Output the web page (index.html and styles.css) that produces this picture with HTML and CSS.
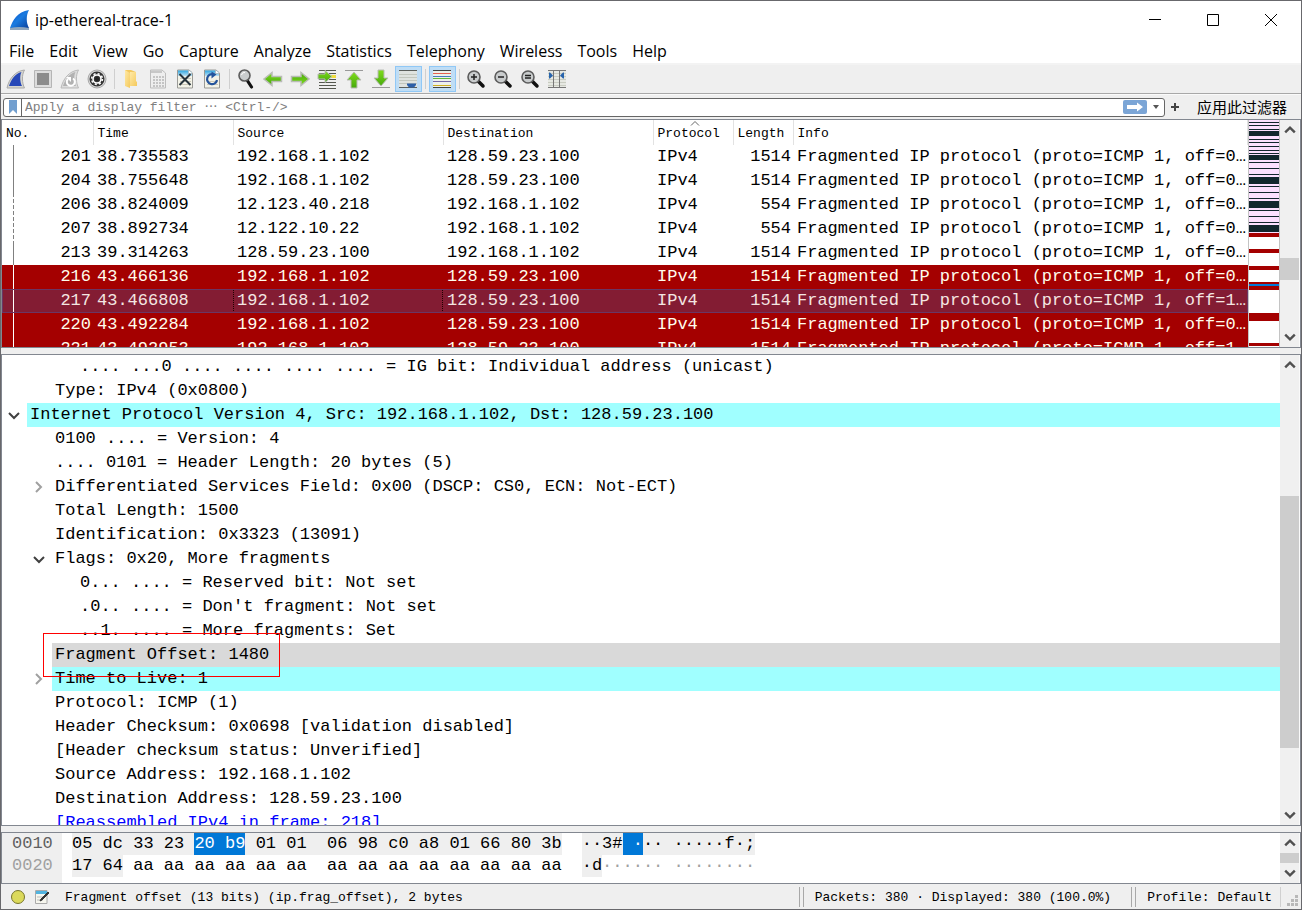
FILE: index.html
```html
<!DOCTYPE html>
<html lang="zh-CN">
<head>
<meta charset="utf-8">
<title>ip-ethereal-trace-1</title>
<link rel="stylesheet" href="styles.css">
</head>
<body>
<svg class="defs" width="0" height="0" aria-hidden="true">
  <defs>
    <linearGradient id="fin-blue" x1="0" y1="0" x2="1" y2="1"><stop offset="0" stop-color="#0a50c8"/><stop offset="0.5" stop-color="#1a7be0"/><stop offset="1" stop-color="#0a3f9a"/></linearGradient>
    <linearGradient id="page-top" x1="0" y1="0" x2="0" y2="1"><stop offset="0" stop-color="#2fa5e0"/><stop offset="1" stop-color="#bfe2f2"/></linearGradient>
    <linearGradient id="leaf" x1="0" y1="0" x2="0" y2="1"><stop offset="0" stop-color="#7fdc1c"/><stop offset="1" stop-color="#46a80c"/></linearGradient>
    <linearGradient id="folder" x1="0" y1="0" x2="1" y2="1"><stop offset="0" stop-color="#ffe9a6"/><stop offset="1" stop-color="#f4c95c"/></linearGradient>
    <symbol id="up" viewBox="0 0 10 10"><path d="M1 7 5 3 9 7" fill="none" stroke="#505050" stroke-width="2"/></symbol>
    <symbol id="down" viewBox="0 0 10 10"><path d="M1 3 5 7 9 3" fill="none" stroke="#505050" stroke-width="2"/></symbol>
    <symbol id="arrow" viewBox="0 0 20 20"><path d="M1 10 9 3.500V7.500H18.500V12.500H9V16.500Z" fill="url(#leaf)" stroke="#b9bcb6" stroke-width="1.500"/></symbol>
    <symbol id="lens" viewBox="0 0 20 20"><path d="M12 12 17 17" stroke="#111" stroke-width="3.500" stroke-linecap="round"/><circle cx="8" cy="8" r="6" fill="#c9cccd" stroke="#5c5c5c" stroke-width="1.600"/></symbol>
    <symbol id="page" viewBox="0 0 20 20"><path d="M2.500 1H14L17.500 4V19H2.500Z" fill="#f3f3e8" stroke="#9a9a96"/><path d="M3 1.500H14L17 4V7H3Z" fill="url(#page-top)"/><path d="M13.500 1V4.500H17.500" fill="#fff" stroke="#aaa" stroke-width=".6"/></symbol>
  </defs>
</svg>

<div class="window">
  <header class="titlebar">
    <svg class="app-icon" viewBox="0 0 22 22"><path d="M1 19C4 11 8 3 20 1C17 6 17 14 20 19Z" fill="url(#fin-blue)"/><path d="M1 19Q10 17 20 19V21H1Z" fill="#8fa6bd"/></svg>
    <h1 class="title">ip-ethereal-trace-1</h1>
    <div class="window-controls">
      <button aria-label="Minimize"><svg viewBox="0 0 14 14"><path d="M1 6.500H13" /></svg></button>
      <button aria-label="Maximize"><svg viewBox="0 0 14 14"><path d="M1.500 1.500H12.500V12.500H1.500Z"/></svg></button>
      <button aria-label="Close"><svg viewBox="0 0 14 14"><path d="M1 1 13 13M13 1 1 13"/></svg></button>
    </div>
  </header>

  <nav class="menubar">
    <button>File</button><button>Edit</button><button>View</button><button>Go</button><button>Capture</button><button>Analyze</button><button>Statistics</button><button>Telephony</button><button>Wireless</button><button>Tools</button><button>Help</button>
  </nav>

  <div class="toolbar" role="toolbar">
    <button aria-label="Start capture"><svg viewBox="0 0 20 20"><path d="M1 19C3 10 9 2 18.500 1C15.500 6 16 14 18.500 19Z" fill="#d5d5d0" stroke="#aaa"/><path d="M3 17C5 11 9 4.500 15.500 3C13.500 7 14 13 16 17Z" fill="#2748b8"/></svg></button>
    <button aria-label="Stop capture"><svg viewBox="0 0 20 20"><path d="M1.500 1.500H18.500V18.500H1.500Z" fill="#ddd" stroke="#b5b5b5"/><path d="M4 4H16V16H4Z" fill="#8c8c8c"/></svg></button>
    <button aria-label="Restart capture"><svg viewBox="0 0 20 20"><path d="M1 19C3 10 9 2 18.500 1C15.500 6 16 14 18.500 19Z" fill="#ddd" stroke="#bbb"/><path d="M3 17C5 11 9 4.500 15.500 3C13.500 7 14 13 16 17Z" fill="#b2b2b2"/><path d="M13 9.500A4 4 0 1 1 8 10" fill="none" stroke="#fff" stroke-width="2"/><path d="M6 8H11V13Z" fill="#fff"/></svg></button>
    <button aria-label="Capture options"><svg viewBox="0 0 20 20"><circle cx="10" cy="10" r="9" fill="#d4d4d4" stroke="#a8a8a8"/><circle cx="10" cy="10" r="7.500" fill="#333"/><circle cx="10" cy="10" r="4" fill="none" stroke="#fff" stroke-width="1.600"/><circle cx="10" cy="10" r="5.400" fill="none" stroke="#fff" stroke-width="1.500" stroke-dasharray="2.100 2.140"/><circle cx="10" cy="10" r="2" fill="#222"/></svg></button>
    <i class="sep"></i>
    <button aria-label="Open"><svg viewBox="0 0 20 20"><path d="M4 1H10L15 3V17H4Z" fill="#f3c85f"/><path d="M4 1 9 4V19L4 17Z" fill="url(#folder)"/><path d="M9 3H15V12L16 13V17H9Z" fill="url(#folder)"/></svg></button>
    <button aria-label="Save"><svg viewBox="0 0 20 20"><path d="M2.500 1H14L17.500 4V19H2.500Z" fill="#eee" stroke="#bdbdbd"/><path d="M3 1.500H14V4H3Z" fill="#c7c7c7"/><path d="M5 8H16M5 11H16M5 14H16M5 17H16" stroke="#c4c4c4" stroke-width="2" stroke-dasharray="2 1"/></svg></button>
    <button aria-label="Close file"><svg viewBox="0 0 20 20"><use href="#page"/><path d="M5 9.500H16M5 12.500H16M5 15.500H16" stroke="#ccc8b8"/><path d="M4.500 5 15.500 16M15.500 5 4.500 16" stroke="#26333c" stroke-width="2"/></svg></button>
    <button aria-label="Reload file"><svg viewBox="0 0 20 20"><use href="#page"/><path d="M5 15.500H16M5 12.500H16" stroke="#ccc8b8"/><path d="M12 5.500A5 5 0 1 0 15 11" fill="none" stroke="#24549c" stroke-width="2.200"/><path d="M9.500 2.500V9.500L14.500 5.500Z" fill="#24549c"/></svg></button>
    <i class="sep"></i>
    <button aria-label="Find packet"><svg viewBox="0 0 20 20"><path d="M11 11 15.500 18" stroke="#111" stroke-width="3.200" stroke-linecap="round"/><circle cx="8.500" cy="6.500" r="5.500" fill="#c9cccd" stroke="#5c5c5c" stroke-width="1.600"/><path d="M5.500 6A3 3 0 0 1 9 3.500" stroke="#fff" fill="none"/></svg></button>
    <button aria-label="Previous packet"><svg viewBox="0 0 20 20"><use href="#arrow"/></svg></button>
    <button aria-label="Next packet"><svg viewBox="0 0 20 20"><use href="#arrow" transform="rotate(180 10 10)"/></svg></button>
    <button aria-label="Go to packet"><svg viewBox="0 0 20 20"><path d="M2 1.500H19M2 4.500H19M2 10.500H19M2 13.500H19M2 16.500H19M2 19.500H19" stroke="#55584f"/><path d="M14 7.500H19" stroke="#f0dc3c" stroke-width="3"/><path d="M15 7.500 8 1.500V5H1V10H8V13.500Z" fill="url(#leaf)" stroke="#b9bcb6"/></svg></button>
    <button aria-label="First packet"><svg viewBox="0 0 20 20"><path d="M1 1.500H19" stroke="#999"/><path d="M10 3 17 11H13V19H7V11H3Z" fill="url(#leaf)" stroke="#b9bcb6"/></svg></button>
    <button aria-label="Last packet"><svg viewBox="0 0 20 20"><path d="M1 18.500H19" stroke="#999"/><path d="M10 17 17 9H13V1H7V9H3Z" fill="url(#leaf)" stroke="#b9bcb6"/></svg></button>
    <button class="on" aria-label="Auto scroll" aria-pressed="true"><svg viewBox="0 0 20 20"><path d="M1 2H19V18H1Z" fill="#dfe3df"/><path d="M1 5.500H19M1 8.500H19M1 11.500H19M1 14.500H19" stroke="#c2c7be"/><path d="M1 1.500H19M1 18.500H19" stroke="#5b5f5b"/><path d="M9 14.500H18V16L16 18.500H11L9 16Z" fill="#2b5fa8"/></svg></button>
    <i class="sep"></i>
    <button class="on" aria-label="Colorize" aria-pressed="true"><svg viewBox="0 0 20 20"><path d="M1 1H19V19H1Z" fill="#edf0ea"/><path d="M1 1.500H19M1 18.500H19" stroke="#444"/><path d="M1 4.500H19" stroke="#e46050"/><path d="M1 7.500H19" stroke="#4878c0"/><path d="M1 9.500H19" stroke="#62b83c"/><path d="M1 12.500H19" stroke="#7468a8"/><path d="M1 16.500H19" stroke="#cfae20"/></svg></button>
    <i class="sep"></i>
    <button aria-label="Zoom in"><svg viewBox="0 0 20 20"><use href="#lens"/><path d="M5 8H11M8 5V11" stroke="#222" stroke-width="1.500"/></svg></button>
    <button aria-label="Zoom out"><svg viewBox="0 0 20 20"><use href="#lens"/><path d="M5 8H11" stroke="#222" stroke-width="1.500"/></svg></button>
    <button aria-label="Normal size"><svg viewBox="0 0 20 20"><use href="#lens"/><path d="M5 6.500H11M5 9H11" stroke="#222" stroke-width="1.500"/></svg></button>
    <button aria-label="Resize columns"><svg viewBox="0 0 20 20"><path d="M1 1H19V19H1Z" fill="#e6e8e2"/><path d="M1 4.500H19M1 7.500H19M1 10.500H19M1 13.500H19M1 16.500H19" stroke="#c9ccc2"/><path d="M1 1.500H19M1 18.500H19M6.500 1V19M12.500 1V19" stroke="#777"/><path d="M2 3.500H3L6 6.500 3 9.500H2ZM17 3.500H16L13 6.500 16 9.500H17Z" fill="#2864ac"/></svg></button>
  </div>

  <form class="filterbar">
    <div class="filter-box">
      <button type="button" class="bookmark" aria-label="Bookmarks"><svg viewBox="0 0 10 14"><path d="M1 0H9V14L5 10 1 14Z" fill="#729fcf"/></svg></button>
      <input class="filter-input" type="text" aria-label="Display filter" placeholder="Apply a display filter ⋯ &lt;Ctrl-/&gt;">
      <button type="button" class="apply" aria-label="Apply filter"><svg viewBox="0 0 24 14"><path d="M4 5H14V2.500L20 7 14 11.500V9H4Z" fill="#fff"/></svg></button>
      <button type="button" class="recent" aria-label="Recent filters"><svg viewBox="0 0 8 8"><path d="M1 2H7L4 6Z" fill="#555"/></svg></button>
    </div>
    <button type="button" class="add" aria-label="Add filter button"><svg viewBox="0 0 10 10"><path d="M1 5H9M5 1V9" stroke="#444" stroke-width="2"/></svg></button>
    <button type="button" class="apply-label">应用此过滤器</button>
  </form>

  <main class="panes">
    <section class="pane packets">
      <div class="pane-body">
        <table class="packet-table">
          <colgroup><col class="c-no"><col class="c-time"><col class="c-addr"><col class="c-addr"><col class="c-proto"><col class="c-len"><col></colgroup>
          <thead><tr><th>No.</th><th>Time</th><th>Source</th><th>Destination</th><th class="sorted">Protocol<svg viewBox="0 0 10 5"><path d="M1 4.500 5 .5 9 4.500" fill="none" stroke="#666"/></svg></th><th>Length</th><th>Info</th></tr></thead>
          <tbody>
            <tr><td class="num">201</td><td>38.735583</td><td>192.168.1.102</td><td>128.59.23.100</td><td>IPv4</td><td class="num">1514</td><td>Fragmented IP protocol (proto=ICMP 1, off=0…</td></tr>
            <tr><td class="num">204</td><td>38.755648</td><td>192.168.1.102</td><td>128.59.23.100</td><td>IPv4</td><td class="num">1514</td><td>Fragmented IP protocol (proto=ICMP 1, off=0…</td></tr>
            <tr class="gap"><td class="num">206</td><td>38.824009</td><td>12.123.40.218</td><td>192.168.1.102</td><td>IPv4</td><td class="num">554</td><td>Fragmented IP protocol (proto=ICMP 1, off=0…</td></tr>
            <tr class="gap"><td class="num">207</td><td>38.892734</td><td>12.122.10.22</td><td>192.168.1.102</td><td>IPv4</td><td class="num">554</td><td>Fragmented IP protocol (proto=ICMP 1, off=0…</td></tr>
            <tr><td class="num">213</td><td>39.314263</td><td>128.59.23.100</td><td>192.168.1.102</td><td>IPv4</td><td class="num">1514</td><td>Fragmented IP protocol (proto=ICMP 1, off=0…</td></tr>
            <tr class="ttl"><td class="num">216</td><td>43.466136</td><td>192.168.1.102</td><td>128.59.23.100</td><td>IPv4</td><td class="num">1514</td><td>Fragmented IP protocol (proto=ICMP 1, off=0…</td></tr>
            <tr class="ttl current"><td class="num">217</td><td>43.466808</td><td class="focus">192.168.1.102</td><td>128.59.23.100</td><td>IPv4</td><td class="num">1514</td><td>Fragmented IP protocol (proto=ICMP 1, off=1…</td></tr>
            <tr class="ttl"><td class="num">220</td><td>43.492284</td><td>192.168.1.102</td><td>128.59.23.100</td><td>IPv4</td><td class="num">1514</td><td>Fragmented IP protocol (proto=ICMP 1, off=0…</td></tr>
            <tr class="ttl"><td class="num">221</td><td>43.492953</td><td>192.168.1.102</td><td>128.59.23.100</td><td>IPv4</td><td class="num">1514</td><td>Fragmented IP protocol (proto=ICMP 1, off=1…</td></tr>
          </tbody>
        </table>
      </div>
      <svg class="minimap" viewBox="0 0 30 227" preserveAspectRatio="none" shape-rendering="crispEdges">
        <path d="M0 0H30V227H0Z" fill="#fff"/><path d="M0 0H30V113H0Z" fill="#fce0ff"/>
        <path fill="#12272e" d="M0 2h30v1H0zM0 5h30v1H0zM0 9h30v1H0zM0 11h30v5H0zM0 19h30v1H0zM0 22h30v1H0zM0 26h30v1H0zM0 30h30v1H0zM0 33h30v1H0zM0 35h30v5H0zM0 42h30v1H0zM0 48h30v1H0zM0 54h30v1H0zM0 57h30v7H0zM0 66h30v1H0zM0 72h30v1H0zM0 78h30v1H0zM0 81h30v7H0zM0 90h30v1H0zM0 96h30v1H0zM0 102h30v1H0zM0 105h30v7H0z"/>
        <path fill="#a40000" d="M0 113h30v4H0zM0 129h30v4H0zM0 146h30v4H0zM0 162h30v8H0zM0 193h30v8H0zM0 223h30v3H0z"/>
        <path fill="#0078d7" d="M0 164h30v2H0z"/>
      </svg>
      <div class="scroll"><button aria-label="Scroll up"><svg><use href="#up"/></svg></button><div class="track"><i class="before-a"></i><i class="thumb thumb-a"></i><i class="after-a"></i></div><button aria-label="Scroll down"><svg><use href="#down"/></svg></button></div>
    </section>

    <section class="pane details">
      <div class="pane-body tree" role="tree">
        <div class="node l2"><span>.... ...0 .... .... .... .... = IG bit: Individual address (unicast)</span></div>
        <div class="node l1"><span>Type: IPv4 (0x0800)</span></div>
        <div class="node l0 proto"><svg class="open" viewBox="0 0 12 8"><path d="M1 1 6 6 11 1"/></svg><span>Internet Protocol Version 4, Src: 192.168.1.102, Dst: 128.59.23.100</span></div>
        <div class="node l1"><span>0100 .... = Version: 4</span></div>
        <div class="node l1"><span>.... 0101 = Header Length: 20 bytes (5)</span></div>
        <div class="node l1"><svg class="shut" viewBox="0 0 8 12"><path d="M1 1 6 6 1 11"/></svg><span>Differentiated Services Field: 0x00 (DSCP: CS0, ECN: Not-ECT)</span></div>
        <div class="node l1"><span>Total Length: 1500</span></div>
        <div class="node l1"><span>Identification: 0x3323 (13091)</span></div>
        <div class="node l1"><svg class="open" viewBox="0 0 12 8"><path d="M1 1 6 6 11 1"/></svg><span>Flags: 0x20, More fragments</span></div>
        <div class="node l2"><span>0... .... = Reserved bit: Not set</span></div>
        <div class="node l2"><span>.0.. .... = Don't fragment: Not set</span></div>
        <div class="node l2"><span>..1. .... = More fragments: Set</span></div>
        <div class="node l1 picked"><span>Fragment Offset: 1480</span><i class="mark"></i></div>
        <div class="node l1 proto"><svg class="shut" viewBox="0 0 8 12"><path d="M1 1 6 6 1 11"/></svg><span>Time to Live: 1</span></div>
        <div class="node l1"><span>Protocol: ICMP (1)</span></div>
        <div class="node l1"><span>Header Checksum: 0x0698 [validation disabled]</span></div>
        <div class="node l1"><span>[Header checksum status: Unverified]</span></div>
        <div class="node l1"><span>Source Address: 192.168.1.102</span></div>
        <div class="node l1"><span>Destination Address: 128.59.23.100</span></div>
        <div class="node l1"><span><a href="#frame-218">[Reassembled IPv4 in frame: 218]</a></span></div>
      </div>
      <div class="scroll"><button aria-label="Scroll up"><svg><use href="#up"/></svg></button><div class="track"><i class="before-b"></i><i class="thumb thumb-b"></i><i class="after-b"></i></div><button aria-label="Scroll down"><svg><use href="#down"/></svg></button></div>
    </section>

    <section class="pane bytes">
      <div class="pane-body hexview">
        <div class="offsets"><div>0010</div><div class="dim">0020</div></div>
        <div class="hex"><div><span class="field">05 dc 33 23 </span><span class="field chosen">20 b9</span><span class="field"> 01 01  06 98 c0 a8 01 66 80 3b</span></div><div><span class="field">17 64</span> aa aa aa aa aa aa  aa aa aa aa aa aa aa aa</div></div>
        <div class="ascii"><div><span class="field">··3#</span><span class="field chosen"> ·</span><span class="field">·· ·····f·;</span></div><div><span class="field">·d</span><span class="dim">······ ········</span></div></div>
      </div>
      <div class="scroll"><button aria-label="Scroll up"><svg><use href="#up"/></svg></button><div class="track"><i class="thumb thumb-c"></i></div><button aria-label="Scroll down"><svg><use href="#down"/></svg></button></div>
    </section>
  </main>

  <footer class="statusbar">
    <button aria-label="Expert information"><svg viewBox="0 0 16 16"><circle cx="8" cy="8" r="6.500" fill="#dbd95b" stroke="#77762c"/></svg></button>
    <button aria-label="Capture comments"><svg viewBox="0 0 16 16"><path d="M1.500 1.500H13V14.500H1.500Z" fill="#f6f6ee" stroke="#aaa"/><path d="M2 2H13V5H2Z" fill="#51b3df"/><path d="M3 8H9M3 11H9" stroke="#bbb"/><path d="M14 3 7 10 6 12 8 11 15 4Z" fill="#333" stroke="#333"/></svg></button>
    <span class="status-field">Fragment offset (13 bits) (ip.frag_offset), 2 bytes</span>
    <i class="grip-line"></i>
    <span class="status-packets">Packets: 380 · Displayed: 380 (100.0%)</span>
    <i class="grip-line"></i>
    <button class="profile">Profile: Default</button>
    <svg class="size-grip" viewBox="0 0 12 12"><path d="M8 0h3v3H8zM4 4h3v3H4zM8 4h3v3H8zM0 8h3v3H0zM4 8h3v3H4zM8 8h3v3H8z" fill="#b8b8b8"/></svg>
  </footer>
</div>
</body>
</html>
```
FILE: styles.css
```css
* { box-sizing: border-box; }
body {
  margin: 0;
  color: #000;
  background: #efefef;
  font-family: "Open Sans", "Noto Sans CJK SC", sans-serif;
  font-size: 16px;
}
button {
  margin: 0;
  padding: 0;
  border: 0;
  background: none;
  color: inherit;
  font: inherit;
  display: flex;
  align-items: center;
  justify-content: center;
}
.defs { position: absolute; }
.window {
  height: 100vh;
  display: flex;
  flex-direction: column;
  border: 1px solid #68686c;
  overflow: hidden;
}

/* title and menus */
.titlebar { display: flex; align-items: center; height: 37px; padding-left: 8px; background: #fff; }
.app-icon { width: 22px; height: 22px; }
.title { flex: 1; margin: 0 0 0 4px; font-size: 16px; font-weight: 400; line-height: 22px; }
.window-controls { display: flex; padding-right: 1px; }
.window-controls button { width: 58px; height: 36px; }
.window-controls svg { width: 14px; height: 14px; fill: none; stroke: #000; }
.menubar { display: flex; gap: 15px; height: 27px; padding-left: 8px; background: #fff; border-bottom: 2px solid #f3f3f3; }

/* toolbar */
.toolbar { display: flex; align-items: center; height: 29px; padding-left: 2px; border-bottom: 1px solid #a8a8a8; }
.toolbar button { width: 27px; height: 26px; padding-right: 1px; }
.toolbar button.on { background: #bfddf5; box-shadow: inset 0 0 0 1px #90c8f6; }
.toolbar svg { width: 20px; height: 20px; flex: none; }
.sep { width: 1px; height: 20px; margin: 0 3px; background: #cfcfcf; }

/* filter */
.filterbar { display: flex; align-items: center; height: 25px; margin: 0; padding: 0 14px 0 2px; border-top: 1px solid #fafafa; }
.filter-box { flex: 1; display: flex; align-items: center; height: 19px; border: 1px solid #666; border-radius: 3px; background: #fff; overflow: hidden; }
.bookmark { width: 18px; height: 17px; border-right: 1px solid #666; }
.bookmark svg { width: 10px; height: 14px; }
.filter-input {
  flex: 1;
  min-width: 0;
  height: 17px;
  padding: 0 3px;
  border: 0;
  outline: 0;
  font: 13px "Liberation Mono", "Noto Sans CJK SC", monospace;
}
.filter-input::placeholder { color: #808080; opacity: 1; }
.apply { width: 24px; height: 14px; border-radius: 2px; background: #7ba5d6; }
.apply svg { width: 24px; height: 14px; }
.recent { width: 17px; padding-left: 2px; }
.recent svg { width: 8px; height: 8px; }
.add { width: 20px; }
.add svg { width: 10px; height: 10px; }
.apply-label { margin-left: 12px; font: 15px/20px "Noto Sans CJK SC", sans-serif; }

/* panes */
.panes { flex: 1; min-height: 0; display: flex; flex-direction: column; gap: 6px; }
.pane { display: flex; min-height: 0; border: 1px solid #828790; background: #fff; overflow: hidden; }
.pane-body { flex: 1; min-width: 0; overflow: hidden; font: 17px/24px "Liberation Mono", monospace; }
.packets { flex: 229 1 0; }
.details { flex: 473 1 0; }
.bytes { flex: none; }

.packet-table { width: 100%; table-layout: fixed; border-collapse: collapse; white-space: nowrap; }
.c-no { width: 91px; }
.c-time { width: 140px; }
.c-addr { width: 210px; }
.c-proto { width: 80px; }
.c-len { width: 60px; }
.packet-table th {
  position: relative;
  height: 25px;
  padding: 2px 0 0 4px;
  border-right: 1px solid #e2e2e2;
  font: 13px/22px "Liberation Mono", monospace;
  text-align: left;
}
.packet-table th svg { position: absolute; top: 1px; left: 36px; width: 10px; height: 5px; }
.packet-table td { height: 24px; padding: 0 0 0 4px; }
.packet-table td.num { padding: 0 2px 0 0; text-align: right; }
.packet-table td:first-child { background: linear-gradient(#808080, #808080) 11px 0 / 1px 24px no-repeat; }
.packet-table .gap td:first-child { background-image: repeating-linear-gradient(#808080 0 4px, transparent 4px 6px); }
.packet-table .ttl { background: #a40000; color: #fffcec; }
.packet-table .ttl td:first-child { background-image: linear-gradient(#fff, #fff); }
.packet-table .current { background: #831c33; color: #f4e6e2; outline: 1px solid #6b3563; outline-offset: -1px; }
.packet-table .focus { outline: 1px dotted #200; outline-offset: -1px; }
.minimap { width: 32px; height: 100%; border: 1px solid #c4c4c4; border-width: 0 1px; }

.scroll { flex: none; width: 20px; display: flex; flex-direction: column; background: #f0f0f0; border-right: 1px solid #fafafa; }
.scroll button { flex: none; height: 20px; }
.scroll svg { width: 12px; height: 12px; }
.track { flex: 1; display: flex; flex-direction: column; min-height: 10px; }
.thumb { background: #cdcdcd; }
.before-a { flex: 118; }
.thumb-a { flex: 22; }
.after-a { flex: 47; }
.before-b { flex: 121; }
.thumb-b { flex: 254; }
.after-b { flex: 57; }
.thumb-c { flex: 1; }

/* packet details */
.node { display: flex; position: relative; height: 24px; white-space: nowrap; }
.node span { flex: 1; padding-left: 3px; }
.node svg { position: absolute; fill: none; stroke-width: 2; }
.node .open { width: 12px; height: 8px; top: 9px; margin-left: -19px; left: 25px; stroke: #404040; }
.node .shut { width: 8px; height: 12px; top: 6px; margin-left: -17px; left: 25px; stroke: #a0a0a0; }
.l0 { padding-left: 25px; }
.l1 { padding-left: 50px; }
.l2 { padding-left: 75px; }
.node.l1 .open, .node.l1 .shut { left: 50px; }
.proto span { background: #a0ffff; }
.picked span { background: #d9d9d9; }
.picked { z-index: 1; }
.mark { position: absolute; top: -10px; left: 41px; width: 237px; height: 44px; border: 1px solid #f00; }
.tree a { color: #0000ff; text-decoration: none; }

/* packet bytes */
.hexview { display: flex; line-height: 22px; }
.hexview > div > div { display: flex; height: 22px; white-space: pre; }
.offsets { width: 60px; padding: 0 10px 6px; background: #efefef; color: #606060; }
.dim { color: #a0a0a0; }
.hex { padding-left: 10px; }
.ascii { padding-left: 20px; }
.field { background: #efefef; }
.chosen { background: #0078d7; color: #fff; }

/* status */
.statusbar { display: flex; align-items: center; height: 25px; padding: 0 2px 0 9px; font: 13px "Liberation Mono", monospace; }
.statusbar button svg { width: 16px; height: 16px; }
.statusbar button + button { margin-left: 8px; }
.status-field { flex: 1; padding-left: 15px; padding-top: 2px; }
.grip-line { width: 5px; height: 20px; border: 1px solid #a8a8a8; border-width: 0 1px; }
.status-packets { padding: 2px 20px 0 11px; }
.statusbar .profile { padding: 2px 8px 0 11px; height: 20px; border-right: 1px solid #d0d0d0; }
.size-grip { width: 12px; height: 12px; margin: 8px 0 0 6px; }
```
